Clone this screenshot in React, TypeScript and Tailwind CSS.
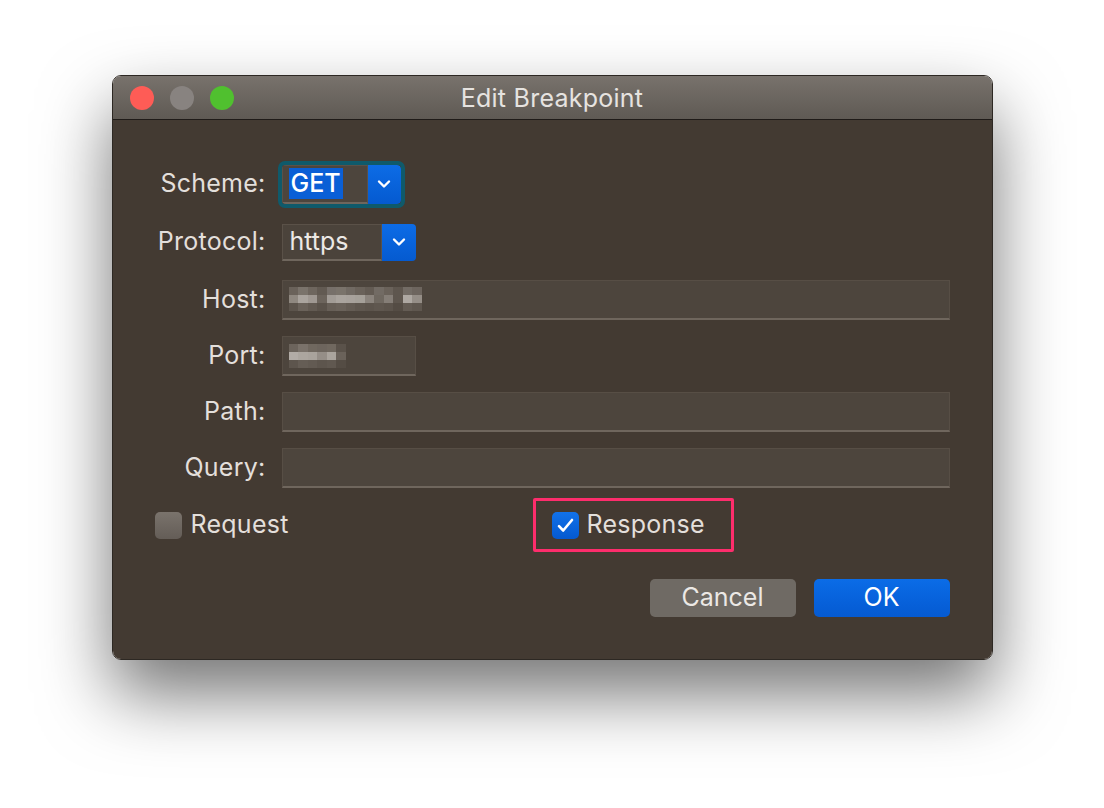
import type { ReactNode } from 'react'

const FONT = { fontFamily: 'Inter, "Liberation Sans", sans-serif' }

// Pixelated blur of redacted values.
const HOST_BLOCKS = [
  ['#6a625a', '#7a736b', '#6e665e', '#625a52', '#77706a', '#7a736b', '#716a63', '#6a625a', '#635b53', '#726b64', '#6a625a', '#5e564e', '#736c65', '#6d655e'],
  ['#8f8880', '#aaa49e', '#9f9892', '#6c645c', '#a29c96', '#aaa49e', '#a8a29c', '#a5a099', '#8b847d', '#6f6860', '#857e77', '#5e564e', '#aea8a2', '#958e87'],
  ['#5c544c', '#6a625a', '#625a52', '#5a524a', '#675f57', '#6a625a', '#645c54', '#5f574f', '#5c544c', '#5f574f', '#5c544c', '#544c44', '#645c54', '#5f574f'],
]
const PORT_BLOCKS = [
  ['#6c645c', '#7a726a', '#70685f', '#6d655d', '#70685f', '#5a524a'],
  ['#b2aca6', '#aca69f', '#a9a39c', '#958e87', '#aaa49d', '#6a625a'],
  ['#5d554d', '#655d55', '#625a52', '#5d554d', '#605850', '#544c44'],
]

function Mosaic({ rows, cell }: { rows: string[][]; cell: number }) {
  return (
    <div className="flex flex-col">
      {rows.map((r, i) => (
        <div key={i} className="flex">
          {r.map((c, j) => (
            <div key={j} style={{ width: cell, height: 8, background: c }} />
          ))}
        </div>
      ))}
    </div>
  )
}

function Chevron() {
  return (
    <svg width="16" height="10" viewBox="0 0 16 10" fill="none" stroke="white" strokeWidth="2.4" strokeLinecap="round" strokeLinejoin="round">
      <path d="M3 2.5l5 5 5-5" />
    </svg>
  )
}

function Row({ label, height, children }: { label: string; height: string; children: ReactNode }) {
  return (
    <div className={`flex items-center ${height}`}>
      <div className="w-[111px] shrink-0 text-right text-[25px] tracking-[0.01em] whitespace-nowrap text-[#e3dfdb]">{label}</div>
      <div className="ml-4 flex flex-1 items-center">{children}</div>
    </div>
  )
}

function TextField({ wide, children }: { wide?: boolean; children?: ReactNode }) {
  return (
    <div
      className={`flex h-[40px] items-center border border-[#574e45] border-b-2 border-b-[#6f665d] bg-[#4d453d] pl-[6px] ${
        wide ? 'w-[668px]' : 'w-[134px]'
      }`}
    >
      {children}
    </div>
  )
}

function Checkbox({ checked }: { checked?: boolean }) {
  if (checked) {
    return (
      <div className="grid size-[27px] shrink-0 place-items-center rounded-[5px] bg-gradient-to-b from-[#1272ea] to-[#0559cf]">
        <svg width="17" height="15" viewBox="0 0 17 15" fill="none" stroke="white" strokeWidth="2.6" strokeLinecap="round" strokeLinejoin="round">
          <path d="M2 8.2 6.2 12.5 15 2" />
        </svg>
      </div>
    )
  }
  return <div className="size-[27px] shrink-0 rounded-[5px] bg-gradient-to-b from-[#7a736c] to-[#645d57]" />
}

export default function App() {
  return (
    <div className="flex min-h-[808px] justify-center bg-white pt-[75px]" style={FONT}>
      <div className="flex h-[585px] w-[881px] flex-col overflow-hidden rounded-[9px] border border-[#2d2823] shadow-[0_34px_70px_rgba(0,0,0,0.55)]">
        {/* title bar */}
        <div className="relative flex h-[44px] shrink-0 items-center border-b border-[#1f1b18] bg-gradient-to-b from-[#78726c] to-[#5f5a54]">
          <div className="flex gap-4 pl-[17px]">
            <span className="size-6 rounded-full bg-[#fe5c56]" />
            <span className="size-6 rounded-full bg-[#888380]" />
            <span className="size-6 rounded-full bg-[#50c02f]" />
          </div>
          <div className="absolute inset-0 flex items-center justify-center pt-[3px] text-[25px] tracking-[0.01em] text-[#e6e3e0]">
            Edit Breakpoint
          </div>
        </div>

        {/* body */}
        <div className="flex flex-1 flex-col bg-[#433a32] px-[42px] pt-[35px]">
          <Row label="Scheme:" height="h-[58px]">
            <div className="-ml-[4px] rounded-[7px] border-[4px] border-[#0f5a6b]">
              <div className="flex h-[39px] w-[119px] overflow-hidden rounded-[4px]">
                <div className="flex flex-1 items-center border border-[#5a5148] border-b-2 border-b-[#6f665d] bg-[#4d453d] pl-[6px]">
                  <span className="bg-[#0a5fd6] px-[2px] text-[25px] leading-[31px] font-medium text-white">GET</span>
                </div>
                <div className="grid w-[33px] place-items-center rounded-r-[4px] bg-gradient-to-b from-[#0d6ce6] to-[#055ad0]">
                  <Chevron />
                </div>
              </div>
            </div>
          </Row>
          <Row label="Protocol:" height="h-[58px]">
            <div className="flex h-[37px] w-[134px]">
              <div className="flex flex-1 items-center border border-[#5a5148] border-b-2 border-b-[#6f665d] bg-[#4b433b] pl-[7px] text-[25px] text-[#ece9e6]">
                https
              </div>
              <div className="grid w-[34px] place-items-center rounded-r-[4px] bg-gradient-to-b from-[#0d6ce6] to-[#055ad0]">
                <Chevron />
              </div>
            </div>
          </Row>
          <Row label="Host:" height="h-[57px]">
            <TextField wide>
              <Mosaic rows={HOST_BLOCKS} cell={9.5} />
            </TextField>
          </Row>
          <Row label="Port:" height="h-[56px]">
            <TextField>
              <Mosaic rows={PORT_BLOCKS} cell={9.5} />
            </TextField>
          </Row>
          <Row label="Path:" height="h-[56px]">
            <TextField wide />
          </Row>
          <Row label="Query:" height="h-[56px]">
            <TextField wide />
          </Row>

          <div className="flex h-[58px] items-center text-[25px] tracking-[0.01em] text-[#e3dfdb]">
            <div className="flex w-[378px] items-center gap-[9px]">
              <Checkbox />
              <span>Request</span>
            </div>
            <div className="flex h-[54px] items-center gap-[8px] rounded-[2px] border-[3px] border-[#fd2d6c] pr-[26px] pl-[16px]">
              <Checkbox checked />
              <span>Response</span>
            </div>
          </div>

          <div className="mt-[25px] flex justify-end gap-[18px] text-[25px]">
            <button className="h-[38px] w-[146px] rounded-[5px] bg-[#6f6a64] text-[#ebe8e5]">Cancel</button>
            <button className="h-[38px] w-[136px] rounded-[5px] bg-gradient-to-b from-[#0b6ce7] to-[#055ad2] text-white">OK</button>
          </div>
        </div>
      </div>
    </div>
  )
}
